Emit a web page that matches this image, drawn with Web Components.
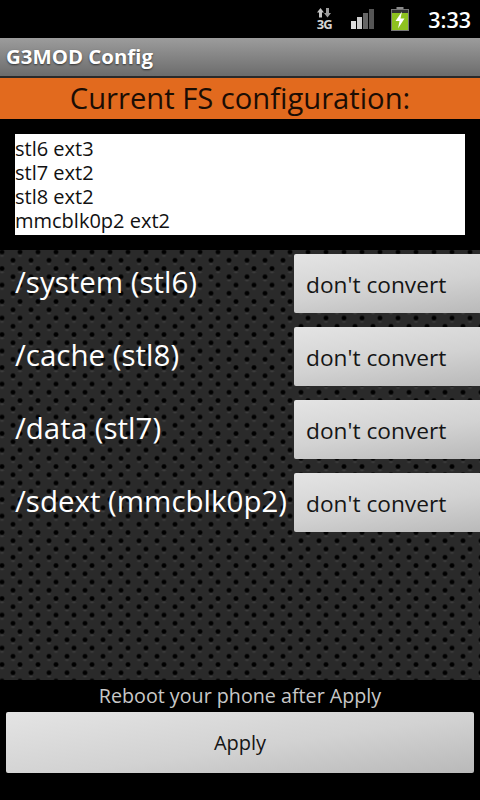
<!DOCTYPE html>
<html>
<head>
<meta charset="utf-8">
<style>
    html, body { margin: 0; padding: 0; background: #000; }
    body { width: 480px; height: 800px; overflow: hidden; font-family: "Open Sans", sans-serif; }
    app-screen { height: 800px; }
</style>
</head>
<body>
<app-screen>
    <status-bar time="3:33"></status-bar>
    <title-bar>G3MOD Config</title-bar>
    <fs-config heading="Current FS configuration:">stl6 ext3
stl7 ext2
stl8 ext2
mmcblk0p2 ext2</fs-config>
    <convert-list>
        <convert-row label="/system (stl6)"></convert-row>
        <convert-row label="/cache (stl8)"></convert-row>
        <convert-row label="/data (stl7)"></convert-row>
        <convert-row label="/sdext (mmcblk0p2)"></convert-row>
    </convert-list>
    <apply-footer></apply-footer>
</app-screen>
<script>
const BTN_BG = 'linear-gradient(172deg, #e4e4e4 0%, #d2d2d2 55%, #b9b9b9 100%)';

class AppScreen extends HTMLElement {
    constructor() {
        super();
        this.attachShadow({ mode: 'open' }).innerHTML = `
            <style>
                :host { display: flex; flex-direction: column; background: #000; }
            </style>
            <slot></slot>
        `;
    }
}

class StatusBar extends HTMLElement {
    constructor() {
        super();
        this.attachShadow({ mode: 'open' }).innerHTML = `
            <style>
                :host { display: flex; justify-content: flex-end; align-items: center; height: 38px; background: #000; color: #fff; }
                svg { display: block; }
                .net { width: 16px; margin-right: 19px; display: flex; flex-direction: column; align-items: center; }
                .net span { font: 700 13px/12px "Open Sans", sans-serif; letter-spacing: -1px; color: #d4d4d4; white-space: nowrap; }
                .signal { margin-right: 16px; }
                .batt { margin-right: 19px; }
                .time { font: 600 21.5px "Open Sans", sans-serif; margin-right: 9px; }
            </style>
            <div class="net">
                <svg width="16" height="10" viewBox="0 0 16 10">
                    <path d="M4.5 0 L8 4.5 H6 V9.5 H3 V4.5 H1 Z" fill="#c4c4c4"/>
                    <path d="M11.5 9.5 L15 5 H13 V0 H10 V5 H8 Z" fill="#9c9c9c"/>
                </svg>
                <span>3G</span>
            </div>
            <svg class="signal" width="24" height="22" viewBox="0 0 24 22">
                <rect x="0" y="13" width="5" height="8" fill="#ddd"/>
                <rect x="6" y="9" width="5" height="12" fill="#ccc"/>
                <rect x="12" y="5" width="5" height="16" fill="#666"/>
                <rect x="18" y="1" width="5" height="20" fill="#555"/>
            </svg>
            <svg class="batt" width="18" height="24" viewBox="0 0 18 24">
                <rect x="5.5" y="0" width="7" height="3" fill="#8a8a8a"/>
                <rect x="0.5" y="2.5" width="17" height="21" fill="#333" stroke="#777"/>
                <rect x="1" y="6" width="16" height="17" fill="#8ec21f"/>
                <path d="M11 4.5 L4.5 14 H8.5 L7 21.5 L13.5 11.5 H9.5 Z" fill="#fff"/>
            </svg>
            <span class="time"></span>
        `;
    }
    connectedCallback() {
        this.shadowRoot.querySelector('.time').textContent = this.getAttribute('time') || '';
    }
}

class TitleBar extends HTMLElement {
    constructor() {
        super();
        this.attachShadow({ mode: 'open' }).innerHTML = `
            <style>
                :host {
                    display: flex; align-items: center; height: 38px; padding: 0 6px 2px; box-sizing: border-box;
                    margin-bottom: 2px; box-shadow: 0 2px 0 #2a2a2a;
                    background: linear-gradient(#9c9c9c, #6c6c6c);
                    color: #fff; font: 700 20.4px "Open Sans", sans-serif;
                    text-shadow: 0 1px 2px rgba(0,0,0,.6);
                }
            </style>
            <slot></slot>
        `;
    }
}

class FsConfig extends HTMLElement {
    constructor() {
        super();
        this.attachShadow({ mode: 'open' }).innerHTML = `
            <style>
                :host { display: block; background: #000; height: 172px; }
                h1 {
                    margin: 0; height: 41px; text-align: center;
                    background: #e26a1e; color: #1b0d04;
                    font: 400 29.2px/40px "Open Sans", sans-serif;
                }
                .box {
                    margin: 15px 15px 0; height: 101px; background: #fff; color: #111;
                    font: 400 20px/24px "Open Sans", sans-serif; white-space: pre-line;
                    padding-top: 3px; box-sizing: border-box;
                }
            </style>
            <h1></h1>
            <div class="box"><slot></slot></div>
        `;
    }
    connectedCallback() {
        this.shadowRoot.querySelector('h1').textContent = this.getAttribute('heading') || '';
    }
}

class ConvertList extends HTMLElement {
    constructor() {
        super();
        // perforated backdrop: two staggered rows of holes, each with a faint lit rim below it
        const hole = 'radial-gradient(circle at 9px 8.25px, #000 1.5px, rgba(0,0,0,.55) 2.3px, transparent 3px)';
        const rim = 'radial-gradient(ellipse 3px 1.5px at 9px 12px, rgba(120,120,120,.3), transparent)';
        this.attachShadow({ mode: 'open' }).innerHTML = `
            <style>
                :host {
                    display: flex; flex-direction: column; gap: 14px; height: 430px; box-sizing: border-box;
                    padding-top: 4px;
                    background-color: #2a2a2a;
                    background-image: ${hole}, ${hole}, ${rim}, ${rim};
                    background-size: 18px 16.5px;
                    background-position: -7px -6.25px, 4px 2px, -7px -6.25px, 4px 2px;
                }
            </style>
            <slot></slot>
        `;
    }
}

class ConvertRow extends HTMLElement {
    constructor() {
        super();
        this.attachShadow({ mode: 'open' }).innerHTML = `
            <style>
                :host { display: flex; justify-content: space-between; height: 59px; }
                .label { padding: 9px 0 0 15px; color: #fff; font: 400 29.5px/38px "Open Sans", sans-serif; white-space: nowrap; }
                .btn {
                    width: 186px; box-sizing: border-box; padding: 13px 0 0 12px; border-radius: 2px 0 0 2px;
                    background: ${BTN_BG}; color: #151515;
                    font: 400 22.7px/36px "Open Sans", sans-serif;
                }
            </style>
            <span class="label"></span>
            <div class="btn">don't convert</div>
        `;
    }
    connectedCallback() {
        this.shadowRoot.querySelector('.label').textContent = this.getAttribute('label') || '';
    }
}

class ApplyFooter extends HTMLElement {
    constructor() {
        super();
        this.attachShadow({ mode: 'open' }).innerHTML = `
            <style>
                :host { display: block; background: #000; height: 120px; }
                .note { height: 32px; text-align: center; color: #c8c8c8; font: 400 19.7px/32px "Open Sans", sans-serif; }
                .btn {
                    margin: 0 6px; height: 61px; border-radius: 2px;
                    display: flex; align-items: center; justify-content: center;
                    background: ${BTN_BG}; color: #151515;
                    font: 400 20px "Open Sans", sans-serif;
                }
            </style>
            <div class="note">Reboot your phone after Apply</div>
            <div class="btn">Apply</div>
        `;
    }
}

customElements.define('app-screen', AppScreen);
customElements.define('status-bar', StatusBar);
customElements.define('title-bar', TitleBar);
customElements.define('fs-config', FsConfig);
customElements.define('convert-list', ConvertList);
customElements.define('convert-row', ConvertRow);
customElements.define('apply-footer', ApplyFooter);
</script>
</body>
</html>
